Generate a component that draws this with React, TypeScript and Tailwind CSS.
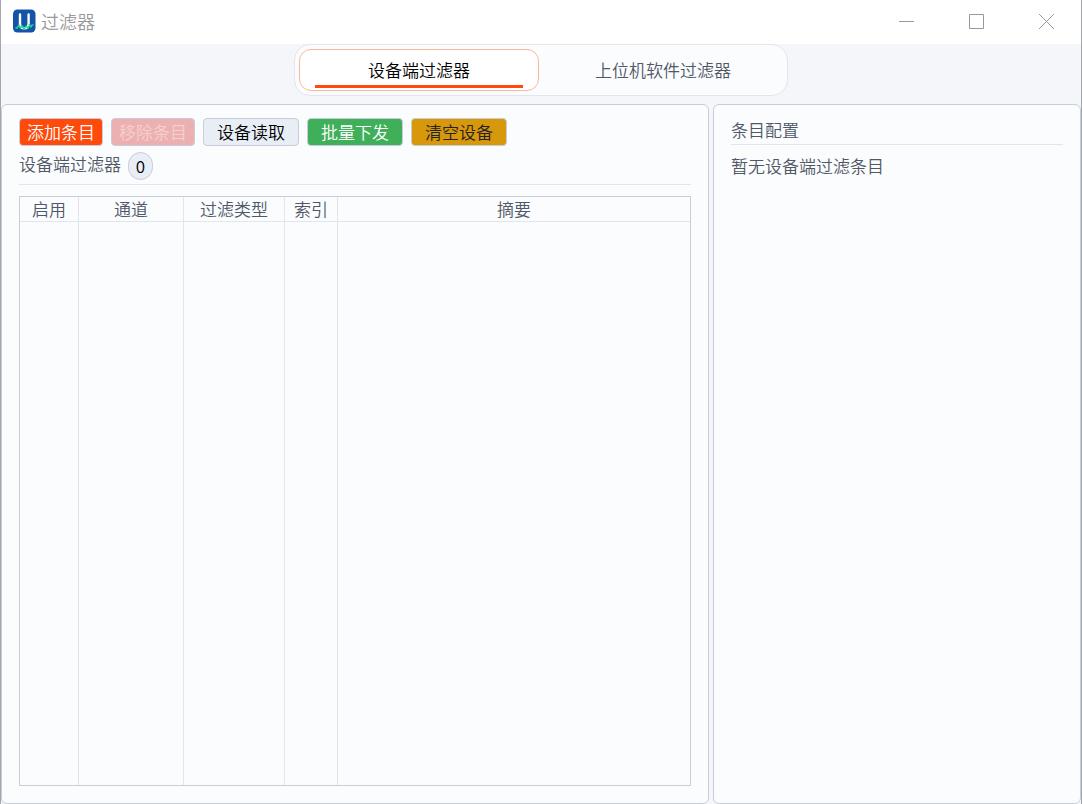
import React, { useState } from "react";

const tabs = ["设备端过滤器", "上位机软件过滤器"];

const columns = [
  { title: "启用", width: "w-[59px]" },
  { title: "通道", width: "w-[105px]" },
  { title: "过滤类型", width: "w-[101px]" },
  { title: "索引", width: "w-[53px]" },
  { title: "摘要", width: "" },
];

interface ToolButtonProps {
  label: string;
  className: string;
  disabled?: boolean;
}

const ToolButton: React.FC<ToolButtonProps> = ({ label, className, disabled }) => {
  return (
    <button
      type="button"
      disabled={disabled}
      className={`h-7 shrink-0 rounded border border-[#c9cdd9] leading-6 ${className}`}
    >
      {label}
    </button>
  );
};

const AppLogo: React.FC = () => {
  return (
    <svg width="24" height="24" viewBox="0 0 24 24" fill="none" aria-hidden="true">
      <rect x="1" y="0.5" width="22.500" height="23" rx="4.500" fill="#1353a8" />
      <path
        d="M8 5.500v9c0 3.200 1.500 4.800 4.300 4.800s4.300-1.600 4.300-4.800v-9"
        stroke="#fff"
        strokeWidth="2.400"
        strokeLinecap="round"
      />
      <path
        d="M3.500 19h1.500l2-3 1.500 3 1.500-2 2 3 2.500-3 1.500 2.500 1.500-4 1.500 2.500 1-2h1.500"
        stroke="#22d992"
        strokeWidth="1.400"
        strokeLinejoin="round"
      />
    </svg>
  );
};

const TitleBar: React.FC = () => {
  return (
    <header className="flex h-11 shrink-0 items-center bg-white pb-0.5 pl-[11px] text-[#999999]">
      <AppLogo />
      <h1 className="ml-[5px] flex-1 text-[18px] leading-6">过滤器</h1>
      <button type="button" aria-label="最小化" className="flex h-full w-[70px] items-center justify-center">
        <svg width="15" height="15" viewBox="0 0 15 15" stroke="currentColor" fill="none">
          <path d="M0 7.500h15" />
        </svg>
      </button>
      <button type="button" aria-label="最大化" className="flex h-full w-[70px] items-center justify-center">
        <svg width="15" height="15" viewBox="0 0 15 15" stroke="currentColor" fill="none">
          <path d="M0.500 0.500h14v14h-14z" />
        </svg>
      </button>
      <button type="button" aria-label="关闭" className="flex h-full w-[70px] items-center justify-center">
        <svg width="15" height="15" viewBox="0 0 15 15" stroke="currentColor" fill="none">
          <path d="M0 0l15 15M15 0L0 15" />
        </svg>
      </button>
    </header>
  );
};

const FilterTable: React.FC = () => {
  return (
    <table className="h-full w-full table-fixed border-separate border-spacing-0 border border-[#c9cdd9]">
      <thead>
        <tr>
          {columns.map((column) => (
            <th
              key={column.title}
              scope="col"
              className={`h-[25px] border-r border-b border-[#e2e5ec] p-0 font-[350] leading-6 last:border-r-0 ${column.width}`}
            >
              {column.title}
            </th>
          ))}
        </tr>
      </thead>
      <tbody>
        <tr className="h-full">
          {columns.map((column) => (
            <td key={column.title} className="border-r border-[#e2e5ec] p-0 last:border-r-0" />
          ))}
        </tr>
      </tbody>
    </table>
  );
};

const App: React.FC = () => {
  const [active, setActive] = useState(0);

  return (
    <div className="flex h-screen flex-col border-x border-[#a3a6ac] bg-[#f4f6fa] font-['Noto_Sans_CJK_SC',sans-serif] text-[17px] font-[350] leading-6 text-[#505867]">
      <TitleBar />
      <nav className="flex shrink-0 justify-center">
        <div className="flex gap-1 rounded-2xl border border-[#e2e5ec] bg-[#fafcfe] p-1">
          {tabs.map((tab, index) => (
            <button
              key={tab}
              type="button"
              onClick={() => setActive(index)}
              className={`relative h-[42px] w-60 rounded-xl border ${
                active === index ? "border-[#ffb59c] bg-white text-black" : "border-transparent"
              }`}
            >
              {tab}
              {active === index && (
                <span className="absolute inset-x-[15px] bottom-0.5 h-[3px] bg-[#ff4a0c]" />
              )}
            </button>
          ))}
        </div>
      </nav>

      <main className="mt-2 grid min-h-0 flex-1 grid-cols-[708fr_368fr] gap-1">
        <section className="flex min-h-0 flex-col rounded-md border border-[#c9cdd9] bg-[#fafcfe] px-[17px] pt-[13px] pb-[17px]">
          <div className="flex gap-2">
            <ToolButton label="添加条目" className="w-21 bg-[#ff4a0c] text-white" />
            <ToolButton label="移除条目" className="w-21 bg-[#ecb0b0] text-[#f6d0d0]" disabled />
            <ToolButton label="设备读取" className="w-24 bg-[#e9eef6] text-black" />
            <ToolButton label="批量下发" className="w-24 bg-[#3faf5a] text-white" />
            <ToolButton label="清空设备" className="w-24 bg-[#d8980c] text-[#222222]" />
          </div>
          <div className="flex gap-[7px] border-b border-[#e2e5ec] pt-1.5 pb-1">
            <h2>设备端过滤器</h2>
            <span className="flex h-7 w-[25px] items-center justify-center rounded-full border border-[#c9cdd9] bg-[#e9eef6] text-black">
              0
            </span>
          </div>
          <div className="mt-[11px] min-h-0 flex-1">
            <FilterTable />
          </div>
        </section>

        <section className="rounded-md border border-[#c9cdd9] bg-[#fafcfe] px-[17px] pt-[13px]">
          <h2 className="border-b border-[#e2e5ec] pb-0.5">条目配置</h2>
          <p className="mt-[9px]">暂无设备端过滤条目</p>
        </section>
      </main>
    </div>
  );
};

export default App;
